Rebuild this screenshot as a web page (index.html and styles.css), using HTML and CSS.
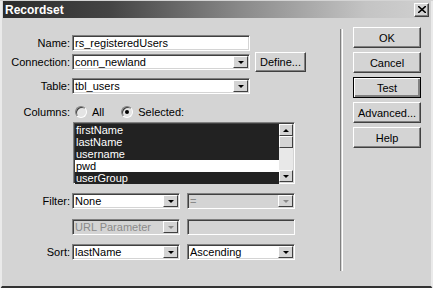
FILE: index.html
```html
<html>

<head>
    <title>Recordset</title>
    <link rel="stylesheet" href="styles.css">
</head>

<body>
    <div class="dialog">
        <div class="titlebar">
            <span class="title">Recordset</span>
            <span class="close">
                <svg width="8" height="7" viewBox="0 0 8 7"><path d="M0 0 L8 7 M8 0 L0 7" stroke="#000" stroke-width="1.6"/></svg>
            </span>
        </div>
        <div class="content">
            <div class="form">
                <div class="row row-name">
                    <label class="label">Name:</label>
                    <div class="field w-wide"><span class="text">rs_registeredUsers</span></div>
                </div>
                <div class="row row-conn">
                    <label class="label">Connection:</label>
                    <div class="field select w-wide"><span class="text">conn_newland</span><span class="arrow"></span></div>
                    <button class="btn btn-define">Define...</button>
                </div>
                <div class="row row-table">
                    <label class="label">Table:</label>
                    <div class="field select w-wide"><span class="text">tbl_users</span><span class="arrow"></span></div>
                </div>
                <div class="row row-cols">
                    <label class="label">Columns:</label>
                    <span class="radio"></span><span class="radio-text">All</span>
                    <span class="radio checked"></span><span class="radio-text">Selected:</span>
                </div>
                <div class="row row-list">
                    <span class="label"></span>
                    <div class="field listbox">
                        <ul class="items">
                            <li class="item sel">firstName</li>
                            <li class="item sel">lastName</li>
                            <li class="item sel">username</li>
                            <li class="item">pwd</li>
                            <li class="item sel">userGroup</li>
                        </ul>
                        <div class="scrollbar">
                            <span class="sb-btn"><span class="tri up"></span></span>
                            <span class="sb-thumb"></span>
                            <span class="sb-track"></span>
                            <span class="sb-btn"><span class="tri"></span></span>
                        </div>
                    </div>
                </div>
                <div class="row row-filter">
                    <label class="label">Filter:</label>
                    <div class="field select w-half"><span class="text">None</span><span class="arrow"></span></div>
                    <div class="field select w-half disabled"><span class="text">=</span><span class="arrow"></span></div>
                </div>
                <div class="row row-url">
                    <span class="label"></span>
                    <div class="field select w-half disabled"><span class="text">URL Parameter</span><span class="arrow"></span></div>
                    <div class="field w-half disabled"></div>
                </div>
                <div class="row row-sort">
                    <label class="label">Sort:</label>
                    <div class="field select w-half"><span class="text">lastName</span><span class="arrow"></span></div>
                    <div class="field select w-half"><span class="text">Ascending</span><span class="arrow"></span></div>
                </div>
            </div>
            <div class="divider"></div>
            <div class="actions">
                <button class="btn">OK</button>
                <button class="btn">Cancel</button>
                <button class="btn default">Test</button>
                <button class="btn">Advanced...</button>
                <button class="btn">Help</button>
            </div>
        </div>
    </div>
</body>

</html>
```

FILE: styles.css
```css
body {
    margin: 0;
    background: #d4d4d4;
    font-family: "Liberation Sans", Arial, sans-serif;
    font-size: 11px;
    color: #000;
}

ul {
    margin: 0;
    padding: 0;
}

li {
    list-style: none;
}

.dialog {
    width: 433px;
    height: 288px;
    box-sizing: border-box;
    border-left: 2px solid #eaeaea;
    border-right: 2px solid #eaeaea;
    border-bottom: 3px solid #333;
    background: #d4d4d4;
}

.titlebar {
    height: 17px;
    margin: 1px 1px 0;
    display: flex;
    align-items: center;
    justify-content: space-between;
    background: linear-gradient(90deg, #2b2b2b, #444 25%, #888 55%, #c4c4c4 85%, #d0d0d0);
}

.title {
    color: #fff;
    font-weight: bold;
    font-size: 12px;
    padding-left: 2px;
}

.close {
    width: 15px;
    height: 14px;
    margin-right: 1px;
    display: flex;
    align-items: center;
    justify-content: center;
    background: #d4d4d4;
    border: 1px solid;
    border-color: #fff #404040 #404040 #fff;
    box-shadow: inset -1px -1px #808080;
    box-sizing: border-box;
}

.content {
    display: flex;
}

.form {
    width: 338px;
}

.row {
    display: flex;
    align-items: center;
    height: 16px;
}

.row-name { margin-top: 17px; }
.row-conn { margin-top: 1px; height: 20px; }
.row-table { margin-top: 6px; }
.row-cols { margin-top: 11px; height: 14px; }
.row-list { margin-top: 3px; height: 62px; align-items: stretch; }
.row-filter { margin-top: 9px; }
.row-url { margin-top: 10px; }
.row-sort { margin-top: 9px; }

.label {
    width: 68px;
    margin-right: 2px;
    text-align: right;
    flex: none;
}

.field {
    height: 16px;
    box-sizing: border-box;
    background: #fff;
    border: 1px solid;
    border-color: #808080 #fff #fff #808080;
    box-shadow: inset 1px 1px #404040, inset -1px -1px #d4d4d4;
    display: flex;
    align-items: center;
    flex: none;
}

.field .text {
    flex: 1;
    padding-left: 2px;
    white-space: nowrap;
    overflow: hidden;
}

.field.disabled {
    background: #d4d4d4;
    color: #8a8a8a;
}

.w-wide { width: 178px; }
.w-half { width: 108px; margin-right: 7px; }

.arrow {
    width: 15px;
    height: 12px;
    margin-right: 1px;
    box-sizing: border-box;
    background: #d4d4d4;
    border: 1px solid;
    border-color: #fff #404040 #404040 #fff;
    display: flex;
    align-items: center;
    justify-content: center;
}

.arrow:after {
    content: "";
    border-left: 3px solid transparent;
    border-right: 3px solid transparent;
    border-top: 3px solid #000;
}

.disabled .arrow:after {
    border-top-color: #8a8a8a;
}

.btn {
    font-family: inherit;
    font-size: 11px;
    color: #000;
    background: #d4d4d4;
    border: 1px solid;
    border-color: #fff #404040 #404040 #fff;
    box-shadow: inset -1px -1px #808080;
    padding: 0;
    box-sizing: border-box;
}

.btn-define {
    width: 51px;
    height: 20px;
    margin-left: 5px;
}

.radio {
    width: 12px;
    height: 12px;
    box-sizing: border-box;
    border-radius: 50%;
    background: #e4e4e4;
    border: 1px solid;
    border-color: #808080 #fff #fff #808080;
    box-shadow: inset 1px 1px #404040;
    display: flex;
    align-items: center;
    justify-content: center;
    margin-left: 3px;
}

.radio.checked:after {
    content: "";
    width: 4px;
    height: 4px;
    border-radius: 50%;
    background: #000;
}

.radio-text {
    margin-left: 5px;
    margin-right: 14px;
}

.listbox {
    width: 222px;
    height: 62px;
    align-items: stretch;
    padding: 1px;
    margin-left: 1px;
}

.items {
    flex: 1;
    background: #fff;
}

.item {
    height: 12px;
    line-height: 12px;
    padding-left: 1px;
    color: #000;
}

.item.sel {
    background: #222;
    color: #fff;
}

.scrollbar {
    width: 14px;
    display: flex;
    flex-direction: column;
    background: #e8e8e8;
}

.sb-btn,
.sb-thumb {
    height: 12px;
    box-sizing: border-box;
    background: #d4d4d4;
    border: 1px solid;
    border-color: #fff #404040 #404040 #fff;
    display: flex;
    align-items: center;
    justify-content: center;
}

.sb-track {
    flex: 1;
}

.tri {
    border-left: 3px solid transparent;
    border-right: 3px solid transparent;
    border-top: 3px solid #000;
}

.tri.up {
    border-top: 0;
    border-bottom: 3px solid #000;
}

.divider {
    width: 1px;
    height: 242px;
    margin-top: 11px;
    border-left: 1px solid #808080;
    border-right: 1px solid #fff;
}

.actions {
    display: flex;
    flex-direction: column;
    gap: 4px;
    margin-left: 10px;
    padding-top: 9px;
}

.actions .btn {
    width: 68px;
    height: 21px;
}

.actions .btn.default {
    border-color: #000;
    box-shadow: inset 1px 1px #fff, inset -2px -2px #808080;
}
```
